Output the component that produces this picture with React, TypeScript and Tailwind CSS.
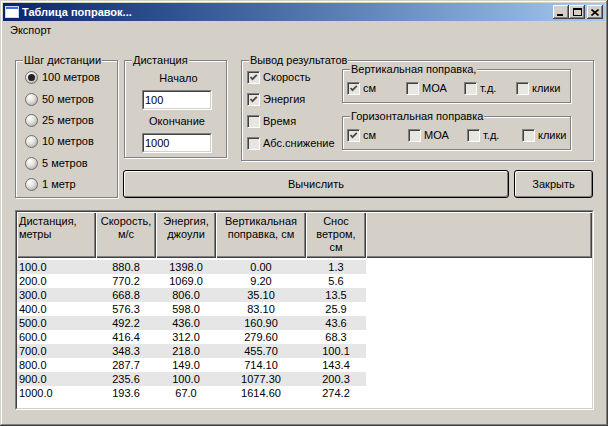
import React from 'react';

const rows = [
  ['100.0', '880.8', '1398.0', '0.00', '1.3'],
  ['200.0', '770.2', '1069.0', '9.20', '5.6'],
  ['300.0', '668.8', '806.0', '35.10', '13.5'],
  ['400.0', '576.3', '598.0', '83.10', '25.9'],
  ['500.0', '492.2', '436.0', '160.90', '43.6'],
  ['600.0', '416.4', '312.0', '279.60', '68.3'],
  ['700.0', '348.3', '218.0', '455.70', '100.1'],
  ['800.0', '287.7', '149.0', '714.10', '143.4'],
  ['900.0', '235.6', '100.0', '1077.30', '200.3'],
  ['1000.0', '193.6', '67.0', '1614.60', '274.2'],
];

const colW = ['w-[79px]', 'w-[60px]', 'w-[60px]', 'w-[90px]', 'w-[60px]'];

function Group({ label, className, children }: { label: string; className: string; children?: React.ReactNode }) {
  return (
    <div className={`relative border border-[#808080] shadow-[inset_1px_1px_#fff,1px_1px_#fff] ${className}`}>
      <span className="absolute left-[7px] -top-[8px] px-[1px] bg-[#d4d0c8] leading-[14px] whitespace-nowrap">{label}</span>
      {children}
    </div>
  );
}

function Radio({ label, checked }: { label: string; checked?: boolean }) {
  return (
    <div className="flex items-center h-[21.4px]">
      <span className="w-[13px] h-[13px] rounded-full border border-[#707070] bg-[radial-gradient(circle_at_35%_30%,#ffffff_0%,#e2e0da_45%,#9a9892_100%)] flex items-center justify-center">
        {checked && <span className="w-[7px] h-[7px] rounded-full bg-[#222]" />}
      </span>
      <span className="ml-[4px] whitespace-nowrap">{label}</span>
    </div>
  );
}

function Check({ label, checked, className }: { label: string; checked?: boolean; className?: string }) {
  return (
    <div className={`flex items-center ${className ?? ''}`}>
      <span className="w-[13px] h-[13px] border border-t-[#808080] border-l-[#808080] border-r-white border-b-white bg-[#e8e6e1] shadow-[inset_1px_1px_#404040] flex items-center justify-center">
        {checked && (
          <svg width="9" height="9" viewBox="0 0 9 9">
            <path d="M1.5 4 L3.5 6.2 L7.8 1.8" stroke="#4a4a4a" strokeWidth="1.8" fill="none" />
          </svg>
        )}
      </span>
      <span className="ml-[3px] whitespace-nowrap">{label}</span>
    </div>
  );
}

function TitleBtn({ children, className }: { children: React.ReactNode; className?: string }) {
  return (
    <div className={`w-[16px] h-[14px] bg-[#d4d0c8] shadow-[inset_-1px_-1px_#404040,inset_1px_1px_#fff,inset_-2px_-2px_#808080] flex items-center justify-center ${className ?? ''}`}>
      {children}
    </div>
  );
}

function Input({ value }: { value: string }) {
  return (
    <div className="w-[70px] h-[20px] border border-t-[#808080] border-l-[#808080] border-r-white border-b-white">
      <div className="w-full h-full border border-t-[#404040] border-l-[#404040] border-r-[#d4d0c8] border-b-[#d4d0c8] bg-white pl-[1px] flex items-center">
        {value}
      </div>
    </div>
  );
}

function Button({ label, className }: { label: string; className: string }) {
  return (
    <div className={`h-[28px] border border-black rounded-[3px] bg-[#d4d0c8] shadow-[inset_1px_1px_#fff,inset_-1px_-1px_#808080] flex items-center justify-center ${className}`}>
      {label}
    </div>
  );
}

export default function App() {
  return (
    <div className="w-[608px] h-[426px] bg-[#d4d0c8] p-[3px] flex flex-col text-[11px] leading-[13px] text-black font-['Liberation_Sans',Arial,sans-serif] shadow-[inset_-1px_-1px_#404040,inset_1px_1px_#d4d0c8,inset_-2px_-2px_#808080,inset_2px_2px_#fff]">
      <div className="h-[18px] flex items-center bg-gradient-to-r from-[#0a246a] to-[#a6caf0] px-[2px]">
        <svg width="14" height="12" viewBox="0 0 14 12" className="mr-[3px]">
          <rect x="0.5" y="0.5" width="13" height="11" fill="#fff" stroke="#c8d8f0" />
          <rect x="1" y="1" width="12" height="2" fill="#3a6ee0" />
        </svg>
        <span className="font-bold text-white">Таблица поправок...</span>
        <div className="flex-1" />
        <TitleBtn>
          <span className="w-[6px] h-[2px] bg-black mt-[6px] -ml-[2px]" />
        </TitleBtn>
        <TitleBtn>
          <span className="w-[9px] h-[8px] border border-black border-t-2" />
        </TitleBtn>
        <TitleBtn className="ml-[2px]">
          <svg width="8" height="7" viewBox="0 0 8 7">
            <path d="M0.5 0.5 L7.5 6.5 M7.5 0.5 L0.5 6.5" stroke="#000" strokeWidth="1.6" />
          </svg>
        </TitleBtn>
      </div>
      <div className="h-[19px] flex items-center pl-[7px]">Экспорт</div>

      <div className="flex-1 flex flex-col pl-[12px] pt-[20px]">
        <div className="flex items-start">
          <Group label="Шаг дистанции" className="w-[103px] h-[138px] pl-[9px] pt-[6px]">
            <Radio label="100 метров" checked />
            <Radio label="50 метров" />
            <Radio label="25 метров" />
            <Radio label="10 метров" />
            <Radio label="5 метров" />
            <Radio label="1 метр" />
          </Group>

          <div className="ml-[6px] w-[470px] flex flex-col">
            <div className="flex items-start">
              <Group label="Дистанция" className="w-[103px] h-[98px] flex flex-col items-center pt-[10px]">
                <div className="h-[14px] leading-[14px] ml-[6px]">Начало</div>
                <div className="mt-[5px] ml-[3px]"><Input value="100" /></div>
                <div className="h-[14px] leading-[14px] mt-[4px] ml-[3px]">Окончание</div>
                <div className="mt-[5px] ml-[3px]"><Input value="1000" /></div>
              </Group>

              <Group label="Вывод результатов" className="ml-[14px] w-[353px] h-[101px] flex">
                <div className="w-[100px] pl-[5px] pt-[10px] flex flex-col gap-[9px]">
                  <Check label="Скорость" checked />
                  <Check label="Энергия" checked />
                  <Check label="Время" />
                  <Check label="Абс.снижение" />
                </div>
                <div className="flex flex-col pt-[8px]">
                  <Group label="Вертикальная поправка," className="w-[229px] h-[34px] flex items-center pl-[4px] pt-[4px]">
                    <Check label="см" checked className="w-[59px]" />
                    <Check label="МОА" className="w-[58px]" />
                    <Check label="т.д." className="w-[52px]" />
                    <Check label="клики" />
                  </Group>
                  <Group label="Горизонтальная поправка" className="mt-[13px] w-[229px] h-[34px] flex items-center pl-[4px] pt-[4px]">
                    <Check label="см" checked className="w-[61px]" />
                    <Check label="МОА" className="w-[59px]" />
                    <Check label="т.д." className="w-[55px]" />
                    <Check label="клики" />
                  </Group>
                </div>
              </Group>
            </div>
            <div className="flex mt-[9px]">
              <Button label="Вычислить" className="w-[386px] -ml-[1px]" />
              <Button label="Закрыть" className="ml-[5px] w-[79px]" />
            </div>
          </div>
        </div>

        <div className="mt-[12px] w-[579px] h-[200px] border border-t-[#808080] border-l-[#808080] border-r-white border-b-white">
          <div className="w-full h-full border border-t-[#404040] border-l-[#404040] border-r-[#d4d0c8] border-b-[#d4d0c8] bg-white flex flex-col">
            <div className="h-[46px] flex bg-[#d4d0c8] leading-[13px]">
              {[
                ['Дистанция,', 'метры'],
                ['Скорость,', 'м/с'],
                ['Энергия,', 'джоули'],
                ['Вертикальная', 'поправка, см'],
                ['Снос', 'ветром,', 'см'],
              ].map((lines, i) => (
                <div
                  key={i}
                  className={`${colW[i]} h-full pt-[3px] shadow-[inset_1px_1px_#fff,inset_-1px_-1px_#404040,inset_-2px_-2px_#808080] ${i === 0 ? 'pl-[2px] text-left' : 'text-center'}`}
                >
                  {lines.map((l) => (
                    <div key={l}>{l}</div>
                  ))}
                </div>
              ))}
              <div className="flex-1 h-full shadow-[inset_1px_1px_#fff,inset_-1px_-1px_#404040,inset_-2px_-2px_#808080]" />
            </div>
            <div className="pt-[2px]">
              {rows.map((r, ri) => (
                <div key={ri} className={`flex h-[14px] leading-[14px] w-[349px] ${ri % 2 === 0 ? 'bg-[#e6e6e6]' : 'bg-white'}`}>
                  {r.map((c, ci) => (
                    <div key={ci} className={`${colW[ci]} ${ci === 0 ? 'pl-[2px]' : 'text-center'}`}>
                      {c}
                    </div>
                  ))}
                </div>
              ))}
            </div>
          </div>
        </div>
      </div>
    </div>
  );
}
